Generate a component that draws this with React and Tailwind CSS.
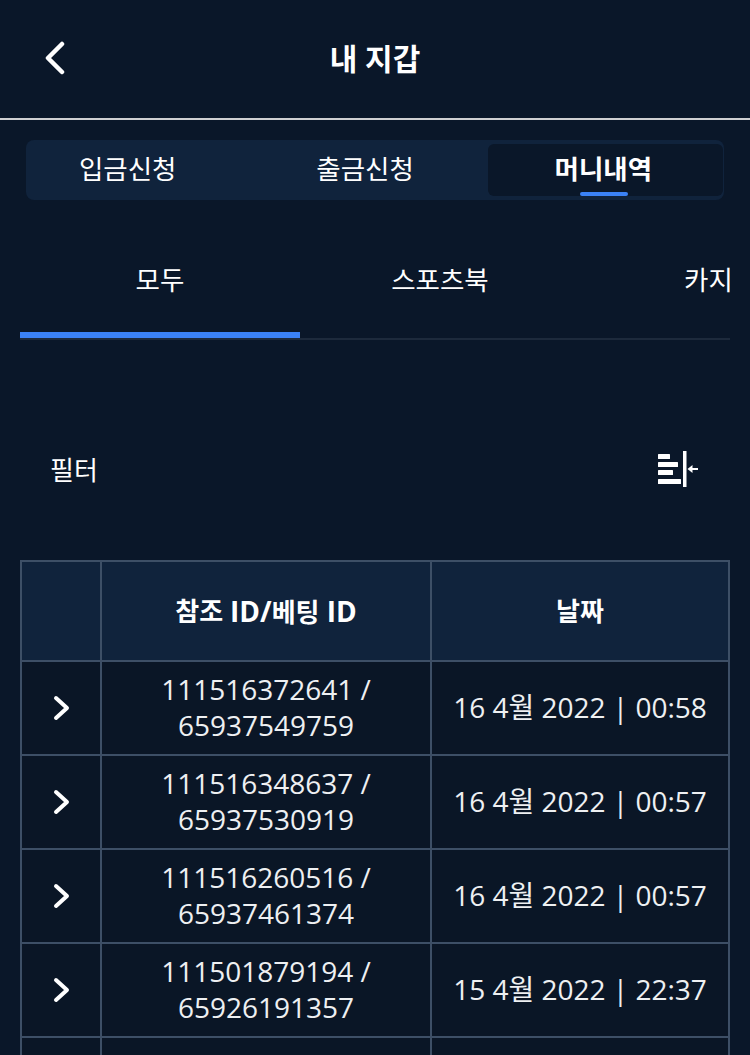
import React from 'react';

const rows = [
  { id: '111516372641 /', bet: '65937549759', date: '16 4월 2022 | 00:58' },
  { id: '111516348637 /', bet: '65937530919', date: '16 4월 2022 | 00:57' },
  { id: '111516260516 /', bet: '65937461374', date: '16 4월 2022 | 00:57' },
  { id: '111501879194 /', bet: '65926191357', date: '15 4월 2022 | 22:37' },
  { id: '', bet: '', date: '' },
];

const Chevron = () => (
  <svg width="18" height="26" viewBox="0 0 18 26" fill="none" stroke="white" strokeWidth="4" strokeLinecap="round" strokeLinejoin="round">
    <path d="M4 3l11 10L4 23" />
  </svg>
);

const FilterIcon = () => (
  <svg className="mb-[2px]" width="40" height="36" viewBox="0 0 40 36" fill="white">
    <rect x="0" y="3" width="12" height="5" rx="0.5" />
    <rect x="0" y="11" width="20" height="5" rx="0.5" />
    <rect x="0" y="19" width="15" height="5" rx="0.5" />
    <rect x="0" y="28" width="23" height="5" rx="0.5" />
    <rect x="25" y="0" width="3.500" height="36" />
    <rect x="32" y="17" width="8" height="2" />
    <path d="M29.500 18l5-4v8z" />
  </svg>
);

export default function App() {
  return (
    <div className="h-[1055px] w-[750px] overflow-hidden bg-[#0a1729] text-white font-['Open_Sans','Noto_Sans_CJK_KR',sans-serif]">
      <header className="relative flex h-[120px] items-center justify-center border-b-2 border-[#cfd0d2]">
        <svg className="absolute left-[44px] top-[41px]" width="22" height="34" viewBox="0 0 22 34" fill="none" stroke="white" strokeWidth="4.500" strokeLinecap="round" strokeLinejoin="round">
          <path d="M18 3L4 17l14 14" />
        </svg>
        <h1 className="text-[30px] font-bold leading-none">내 지갑</h1>
      </header>

      <div className="mx-[26px] mt-5 flex h-[60px] rounded-lg bg-[#10233c] py-1 pr-[1px] text-[26.500px]">
        <div className="flex w-[204px] items-center justify-center">입금신청</div>
        <div className="flex w-[258px] items-center justify-center pl-[14px]">출금신청</div>
        <div className="relative ml-[1px] flex w-[236px] items-center justify-center rounded-md bg-[#0a1729] pr-[4px] font-bold">
          머니내역
          <span className="absolute bottom-0 left-[92px] h-1 w-12 rounded-sm bg-[#3b82f6]" />
        </div>
      </div>

      <div className="mx-5 mt-8 flex h-[108px] overflow-hidden border-b-2 border-[#1d2a3c] text-[26.500px]">
        <div className="flex h-[106px] w-[280px] shrink-0 items-start justify-center border-b-[6px] border-[#3b82f6] pt-[29px]">모두</div>
        <div className="flex w-[280px] shrink-0 items-start justify-center pt-[29px]">스포츠북</div>
        <div className="flex shrink-0 items-start pl-[104px] pt-[29px]">카지노</div>
      </div>

      <div className="ml-[50px] mr-[52px] mt-[110px] flex h-[40px] items-center justify-between text-[26px]">
        <span>필터</span>
        <FilterIcon />
      </div>

      <div className="mx-5 mt-[70px] border-l-2 border-t-2 border-[#3d4f66] text-center">
        <div className="grid h-[100px] grid-cols-[80px_330px_298px] bg-[#10233c] text-[26px] font-bold">
          <div className="border-b-2 border-r-2 border-[#3d4f66]" />
          <div className="flex items-center justify-center gap-[7px] border-b-2 border-r-2 border-[#3d4f66]">
            <span>참조</span>
            <span className="text-[28px]">ID/<span className="text-[26px]">베팅</span> ID</span>
          </div>
          <div className="flex items-center justify-center border-b-2 border-r-2 border-[#3d4f66]">날짜</div>
        </div>
        {rows.map((row, i) => (
          <div key={i} className="grid h-[94px] grid-cols-[80px_330px_298px] bg-[#0a1626] text-[28px] leading-[36px] text-[#eef0f2]">
            <div className="flex items-center justify-center border-b-2 border-r-2 border-[#3d4f66]">{row.id && <Chevron />}</div>
            <div className="flex flex-col items-center justify-center border-b-2 border-r-2 border-[#3d4f66] pb-[2px]">
              <span>{row.id}</span>
              <span>{row.bet}</span>
            </div>
            <div className="flex items-center justify-center border-b-2 border-r-2 border-[#3d4f66] pb-[2px]">{row.date}</div>
          </div>
        ))}
      </div>
    </div>
  );
}
